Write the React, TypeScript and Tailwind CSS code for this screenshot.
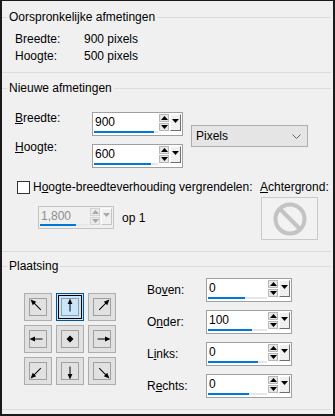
import React from 'react';

type Dir = 'nw' | 'n' | 'ne' | 'w' | 'c' | 'e' | 'sw' | 's' | 'se';

const angles: Record<Dir, number> = {
  nw: -45, n: 0, ne: 45, w: -90, c: 0, e: 90, sw: -135, s: 180, se: 135,
};

function GroupHeader({ title }: { title: string }) {
  return (
    <div className="flex h-[16px] items-center">
      <div className="h-px w-[5px] bg-[#dcdcdc]" />
      <span className="px-[2px] leading-[16px]">{title}</span>
      <div className="h-px flex-1 bg-[#dcdcdc]" />
    </div>
  );
}

function Tri({ up, disabled }: { up?: boolean; disabled?: boolean }) {
  return (
    <svg width="7" height="4" viewBox="0 0 7 4" className="block">
      <path
        d={up ? 'M3.5 0 L7 4 L0 4 Z' : 'M0 0 L7 0 L3.5 4 Z'}
        fill={disabled ? '#a8a8a8' : '#000'}
      />
    </svg>
  );
}

function SpinInput({
  value,
  bar,
  className,
  disabled,
}: {
  value: string;
  bar: number;
  className: string;
  disabled?: boolean;
}) {
  return (
    <div
      className={`flex border ${
        disabled ? 'border-[#c4c4c4] bg-[#f0f0f0]' : 'border-[#a0a0a0] bg-white'
      } ${className}`}
    >
      <div className="flex flex-1 flex-col">
        <span
          className={`pl-[2px] pt-[1px] leading-[16px] ${
            disabled ? 'text-[#8d8d8d]' : 'text-black'
          }`}
        >
          {value}
        </span>
        <div className="mb-[2px] ml-[1px] mr-[1px] mt-auto h-[2px] bg-[#e6e6e6]">
          <div className="h-full bg-[#0078d7]" style={{ width: bar }} />
        </div>
      </div>
      <div className="flex items-start gap-[1px] pr-[1px] pt-[1px]">
        <div className="flex w-[10px] flex-col gap-[1px]">
          <div
            className={`flex h-[8px] items-center justify-center border ${
              disabled ? 'border-[#d4d4d4] bg-[#ececec]' : 'border-[#b8b8b8] bg-[#e6e6e6]'
            }`}
          >
            <Tri up disabled={disabled} />
          </div>
          <div
            className={`flex h-[8px] items-center justify-center border ${
              disabled ? 'border-[#d4d4d4] bg-[#ececec]' : 'border-[#b8b8b8] bg-[#e6e6e6]'
            }`}
          >
            <Tri disabled={disabled} />
          </div>
        </div>
        <div
          className={`flex h-[17px] w-[11px] justify-center border border-l-white border-t-white bg-[#f0f0f0] pt-[4px] ${
            disabled ? 'border-b-[#c4c4c4] border-r-[#c4c4c4]' : 'border-b-[#6d6d6d] border-r-[#6d6d6d]'
          }`}
        >
          <Tri disabled={disabled} />
        </div>
      </div>
    </div>
  );
}

function Arrow({ dir }: { dir: Dir }) {
  if (dir === 'c') {
    return (
      <svg width="16" height="16" viewBox="0 0 16 16">
        <path d="M8 4.5 L11.5 8 L8 11.5 L4.5 8 Z" fill="#000" />
      </svg>
    );
  }
  const diag = dir.length === 2;
  const tip = diag ? 10.5 : 8.5;
  const tail = diag ? 4 : 4.5;
  return (
    <svg width="16" height="16" viewBox="0 0 16 16" className="overflow-visible">
      <g transform={`rotate(${angles[dir]} 8 8)`}>
        <line x1="8" y1={8 - tip + 3} x2="8" y2={8 + tail} stroke="#000" strokeWidth="1" />
        <path d={`M8 ${8 - tip} L10.4 ${8 - tip + 5.5} L5.6 ${8 - tip + 5.5} Z`} fill="#000" />
      </g>
    </svg>
  );
}

function PosButton({ dir, selected }: { dir: Dir; selected?: boolean }) {
  return (
    <div
      className={`flex h-[28px] w-[28px] items-center justify-center border ${
        selected
          ? 'border-[#005499] bg-[#cce4f7] shadow-[inset_0_0_0_1px_#cce4f7,inset_0_0_0_2px_#000]'
          : 'border-[#adadad] bg-[#e1e1e1]'
      }`}
    >
      <div
        className={`flex h-[18px] w-[18px] items-center justify-center border ${
          selected ? 'border-[#8a9fb3]' : 'border-[#a0a0a0]'
        }`}
      >
        <Arrow dir={dir} />
      </div>
    </div>
  );
}

export default function App() {
  const dirs: Dir[] = ['nw', 'n', 'ne', 'w', 'c', 'e', 'sw', 's', 'se'];
  const offsets = [
    { label: ['Bo', 'v', 'en:'], value: '0', bar: 37 },
    { label: ['O', 'n', 'der:'], value: '100', bar: 44 },
    { label: ['L', 'i', 'nks:'], value: '0', bar: 50 },
    { label: ['R', 'e', 'chts:'], value: '0', bar: 41 },
  ];

  return (
    <div className="h-[416px] w-[335px] border-b-2 border-l-2 border-r-2 border-t border-[#1a1a1a] bg-[#f0f0f0] font-['Liberation_Sans',Arial,sans-serif] text-[12px] text-black">
      {/* Oorspronkelijke afmetingen */}
      <section className="mr-[2px] mt-[8px] border-b border-[#dcdcdc] pb-[7px]">
        <GroupHeader title="Oorspronkelijke afmetingen" />
        <div className="mt-[6px] pl-[13px]">
          <div className="flex h-[17px] leading-[17px]">
            <span className="w-[69px]">Breedte:</span>
            <span>900 pixels</span>
          </div>
          <div className="flex h-[17px] leading-[17px]">
            <span className="w-[69px]">Hoogte:</span>
            <span>500 pixels</span>
          </div>
        </div>
      </section>

      {/* Nieuwe afmetingen */}
      <section className="mr-[2px] mt-[7px] border-b border-[#dcdcdc] pb-[11px]">
        <GroupHeader title="Nieuwe afmetingen" />
        <div className="mt-[16px] flex pl-[13px]">
          <div className="flex flex-col gap-[8px]">
            <div className="flex">
              <span className="mt-[-1px] w-[77px] leading-[14px]">
                <span className="underline">B</span>reedte:
              </span>
              <SpinInput value="900" bar={60} className="h-[24px] w-[91px]" />
            </div>
            <div className="flex">
              <span className="mt-[-4px] w-[77px] leading-[14px]">
                <span className="underline">H</span>oogte:
              </span>
              <SpinInput value="600" bar={57} className="h-[24px] w-[91px]" />
            </div>
          </div>
          <div className="ml-[8px] mt-[13px] flex h-[22px] w-[117px] items-center justify-between border border-[#adadad] bg-[#e5e5e5] pl-[4px] pr-[6px]">
            <span>Pixels</span>
            <svg width="9" height="5" viewBox="0 0 9 5">
              <path d="M0.5 0.5 L4.5 4.5 L8.5 0.5" fill="none" stroke="#606060" strokeWidth="1" />
            </svg>
          </div>
        </div>

        <div className="mt-[12px] flex pl-[15px]">
          <div className="w-[243px]">
            <div className="flex h-[14px] items-center gap-[3px]">
              <div className="h-[13px] w-[13px] border border-[#333] bg-white" />
              <span className="leading-[14px]">
                H<span className="underline">o</span>ogte-breedteverhouding vergrendelen:
              </span>
            </div>
            <div className="ml-[21px] mt-[12px] flex items-center">
              <SpinInput value="1,800" bar={36} disabled className="h-[23px] w-[76px]" />
              <span className="ml-[8px]">op 1</span>
            </div>
          </div>
          <div>
            <div className="h-[14px] leading-[14px]">
              <span className="underline">A</span>chtergrond:
            </div>
            <div className="ml-[1px] mt-[3px] flex h-[43px] w-[57px] items-center justify-center border border-[#cacaca] bg-[#f2f2f2]">
              <svg width="34" height="34" viewBox="0 0 34 34">
                <circle cx="17" cy="17" r="14.5" fill="none" stroke="#c3c3c3" strokeWidth="4" />
                <line x1="7" y1="7" x2="27" y2="27" stroke="#c3c3c3" strokeWidth="4" />
              </svg>
            </div>
          </div>
        </div>
      </section>

      {/* Plaatsing */}
      <section className="mr-[2px] mt-[6px] border-b border-[#dcdcdc] pb-[11px]">
        <GroupHeader title="Plaatsing" />
        <div className="mt-[4px] flex pl-[22px]">
          <div className="mt-[15px] grid grid-cols-3 gap-[4px] self-start">
            {dirs.map((d) => (
              <PosButton key={d} dir={d} selected={d === 'n'} />
            ))}
          </div>
          <div className="ml-[31px] flex flex-col gap-[8px]">
            {offsets.map((o) => (
              <div key={o.label.join('')} className="flex items-center">
                <span className="w-[59px] leading-[14px]">
                  {o.label[0]}
                  <span className="underline">{o.label[1]}</span>
                  {o.label[2]}
                </span>
                <SpinInput value={o.value} bar={o.bar} className="h-[24px] w-[86px]" />
              </div>
            ))}
          </div>
        </div>
      </section>
    </div>
  );
}
